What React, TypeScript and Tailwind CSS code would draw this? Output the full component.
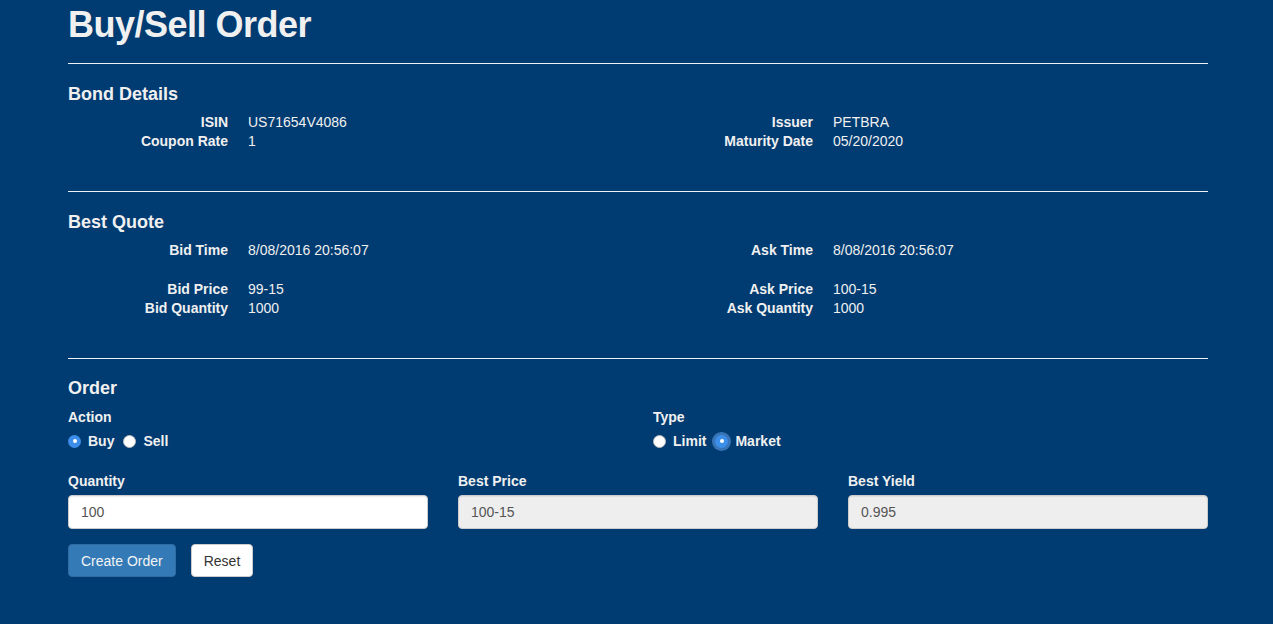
const bondLeft = [
  { label: 'ISIN', value: 'US71654V4086' },
  { label: 'Coupon Rate', value: '1' },
];

const bondRight = [
  { label: 'Issuer', value: 'PETBRA' },
  { label: 'Maturity Date', value: '05/20/2020' },
];

type Row = { label: string; value: string };

const DetailList = ({ rows, className = '' }: { rows: Row[]; className?: string }) => (
  <dl className={`grid grid-cols-[160px_1fr] gap-x-[20px] leading-[19px] ${className}`}>
    {rows.map((row) => (
      <div key={row.label} className="contents">
        <dt className="text-right font-bold">{row.label}</dt>
        <dd>{row.value}</dd>
      </div>
    ))}
  </dl>
);

const Radio = ({ label, checked, focused }: { label: string; checked?: boolean; focused?: boolean }) => (
  <label className="flex items-center">
    {checked ? (
      <span
        className={`flex h-[13px] w-[13px] items-center justify-center rounded-full bg-[#3b8eea] ${
          focused ? 'ring-[3px] ring-[#4f8fd6]/70' : ''
        }`}
      >
        <span className="h-[4px] w-[4px] rounded-full bg-white" />
      </span>
    ) : (
      <span className="h-[13px] w-[13px] rounded-full border border-[#bbb] bg-white" />
    )}
    <span className="ml-[7px] font-bold">{label}</span>
  </label>
);

const Field = ({ label, value, readOnly }: { label: string; value: string; readOnly?: boolean }) => (
  <div>
    <label className="mb-[4px] block font-bold">{label}</label>
    <input
      type="text"
      defaultValue={value}
      readOnly={readOnly}
      className={`block h-[34px] w-full rounded-[4px] border border-[#ccc] px-[12px] text-[14px] text-[#555] shadow-[inset_0_1px_1px_rgba(0,0,0,0.075)] outline-none ${
        readOnly ? 'bg-[#eee]' : 'bg-white'
      }`}
    />
  </div>
);

const App = () => {
  return (
    <div className="min-h-screen bg-[#003b71] font-['Liberation_Sans',Arial,sans-serif] text-[14px] leading-[20px] text-[#f0f0f0]">
      <div className="ml-[68px] w-[1140px] pt-[5px]">
        <h1 className="text-[36px] font-bold leading-[40px] tracking-[-0.5px]">Buy/Sell Order</h1>
        <hr className="mt-[18px] border-0 border-t border-[#eef2f6]" />

        <section>
          <h4 className="mt-[20px] mb-[9px] text-[18px] font-bold leading-[20px]">Bond Details</h4>
          <div className="grid grid-cols-2 gap-x-[30px]">
            <DetailList rows={bondLeft} />
            <DetailList rows={bondRight} />
          </div>
        </section>
        <hr className="mt-[40px] border-0 border-t border-[#eef2f6]" />

        <section>
          <h4 className="mt-[20px] mb-[9px] text-[18px] font-bold leading-[20px]">Best Quote</h4>
          <div className="grid grid-cols-2 gap-x-[30px]">
            <div>
              <DetailList rows={[{ label: 'Bid Time', value: '8/08/2016 20:56:07' }]} />
              <DetailList
                className="mt-[20px]"
                rows={[
                  { label: 'Bid Price', value: '99-15' },
                  { label: 'Bid Quantity', value: '1000' },
                ]}
              />
            </div>
            <div>
              <DetailList rows={[{ label: 'Ask Time', value: '8/08/2016 20:56:07' }]} />
              <DetailList
                className="mt-[20px]"
                rows={[
                  { label: 'Ask Price', value: '100-15' },
                  { label: 'Ask Quantity', value: '1000' },
                ]}
              />
            </div>
          </div>
        </section>
        <hr className="mt-[40px] border-0 border-t border-[#eef2f6]" />

        <section>
          <h4 className="mt-[19px] mb-[10px] text-[18px] font-bold leading-[20px]">Order</h4>
          <div className="grid grid-cols-2 gap-x-[30px]">
            <div>
              <div className="mb-[4px] font-bold leading-[19px]">Action</div>
              <div className="flex h-[20px] items-center gap-x-[9px]">
                <Radio label="Buy" checked />
                <Radio label="Sell" />
              </div>
            </div>
            <div>
              <div className="mb-[4px] font-bold leading-[19px]">Type</div>
              <div className="flex h-[20px] items-center gap-x-[9px]">
                <Radio label="Limit" />
                <Radio label="Market" checked focused />
              </div>
            </div>
          </div>

          <div className="mt-[20px] grid grid-cols-3 gap-x-[30px]">
            <Field label="Quantity" value="100" />
            <Field label="Best Price" value="100-15" readOnly />
            <Field label="Best Yield" value="0.995" readOnly />
          </div>

          <div className="mt-[15px] flex gap-x-[15px]">
            <button
              type="button"
              className="h-[33px] rounded-[4px] border border-[#2e6da4] bg-[#337ab7] px-[12px] text-[14px] text-[#f4f4f4]"
            >
              Create Order
            </button>
            <button
              type="button"
              className="h-[33px] rounded-[4px] border border-[#ccc] bg-white px-[12px] text-[14px] text-[#333]"
            >
              Reset
            </button>
          </div>
        </section>
      </div>
    </div>
  );
};

export default App;
